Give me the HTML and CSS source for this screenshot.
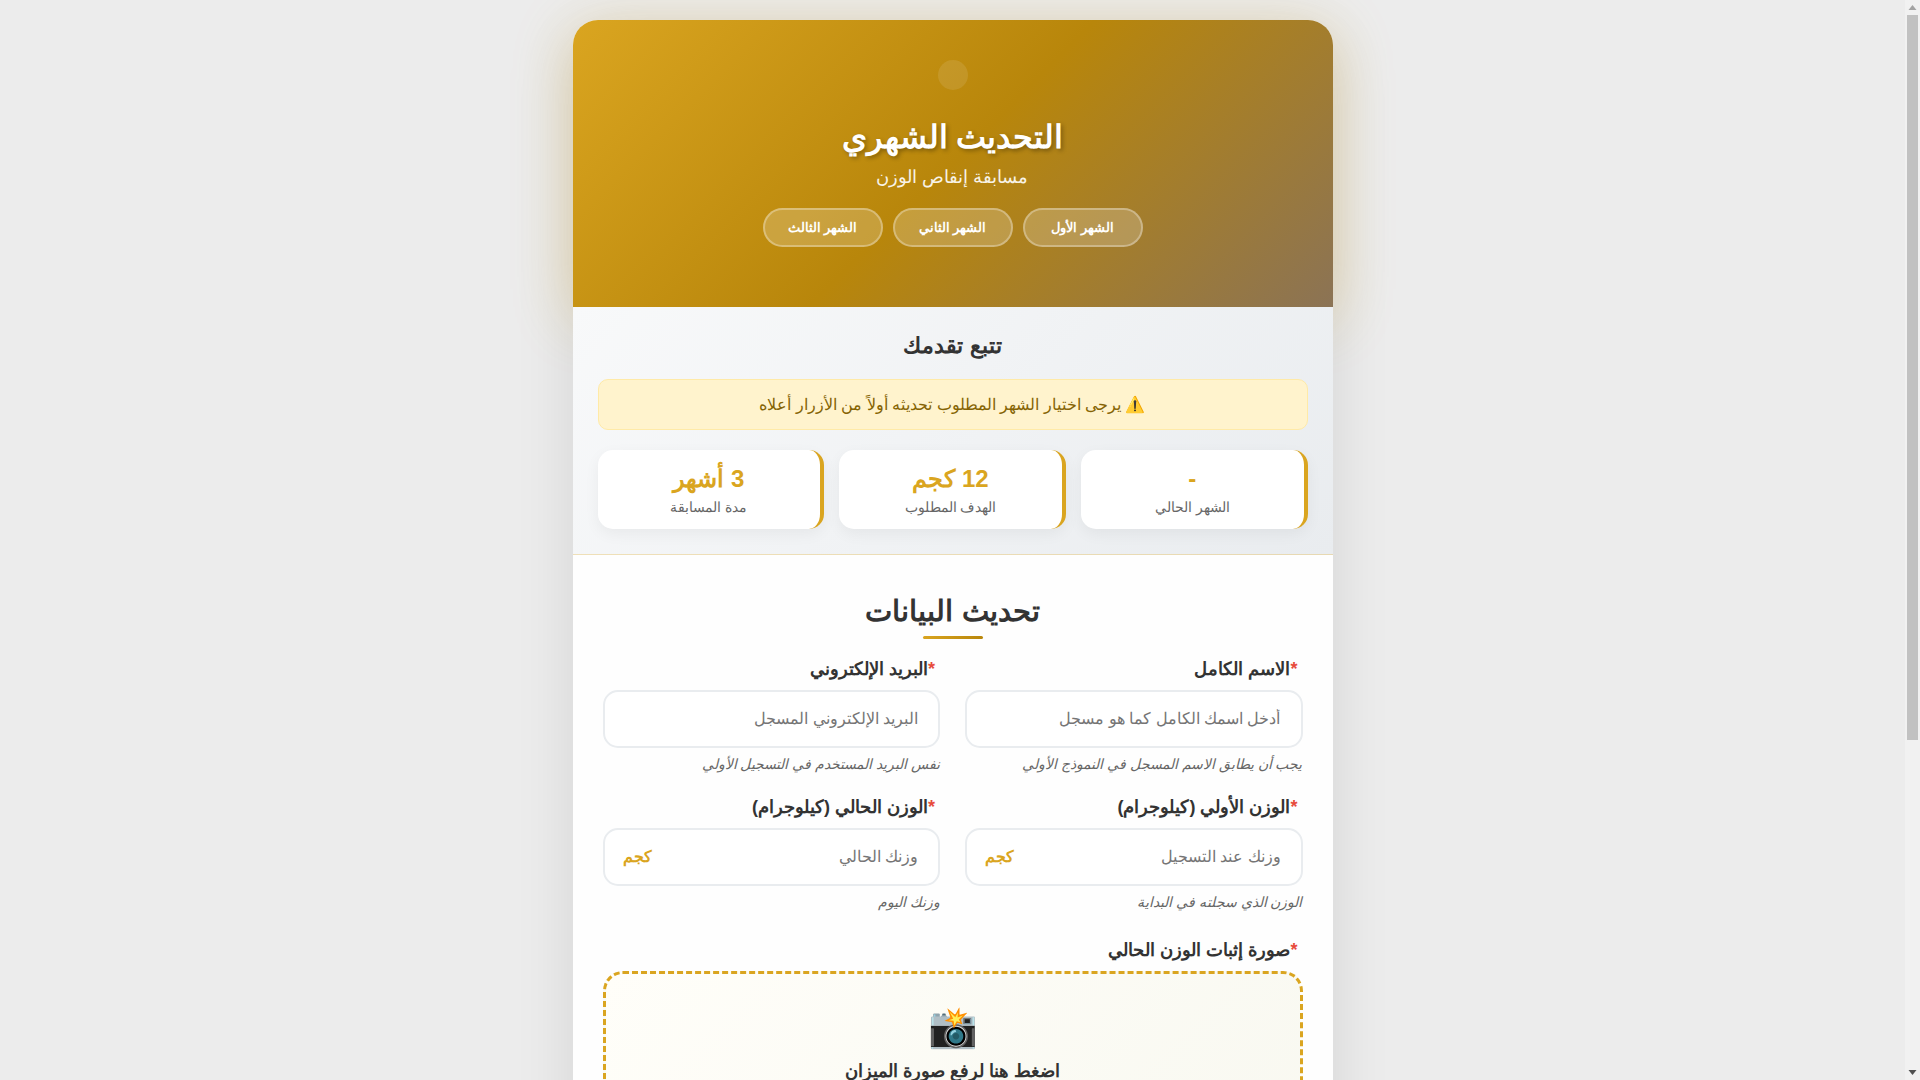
FILE: index.html
```
<!DOCTYPE html>
<html lang="ar" dir="rtl">
<head>
<meta charset="UTF-8">
<meta name="viewport" content="width=device-width, initial-scale=1">
<title>التحديث الشهري</title>
<link rel="stylesheet" href="styles.css">
</head>
<body>
<main class="container">
  <header class="header">
    <div class="logo"></div>
    <h1 class="title">التحديث الشهري</h1>
    <p class="subtitle">مسابقة إنقاص الوزن</p>
    <div class="months">
      <button type="button" class="month">الشهر الأول</button>
      <button type="button" class="month">الشهر الثاني</button>
      <button type="button" class="month">الشهر الثالث</button>
    </div>
  </header>
  <section class="progress">
    <h2 class="progress-title">تتبع تقدمك</h2>
    <p class="alert">⚠️ يرجى اختيار الشهر المطلوب تحديثه أولاً من الأزرار أعلاه</p>
    <div class="stats">
      <div class="stat"><div class="stat-value">-</div><div class="stat-label">الشهر الحالي</div></div>
      <div class="stat"><div class="stat-value">12 كجم</div><div class="stat-label">الهدف المطلوب</div></div>
      <div class="stat"><div class="stat-value">3 أشهر</div><div class="stat-label">مدة المسابقة</div></div>
    </div>
  </section>
  <form class="form">
    <h2 class="form-title">تحديث البيانات</h2>
    <div class="fields">
      <div class="field">
        <label class="label" for="name"><span class="required">*</span>الاسم الكامل</label>
        <input class="input" id="name" type="text" placeholder="أدخل اسمك الكامل كما هو مسجل">
        <p class="hint">يجب أن يطابق الاسم المسجل في النموذج الأولي</p>
      </div>
      <div class="field">
        <label class="label" for="email"><span class="required">*</span>البريد الإلكتروني</label>
        <input class="input" id="email" type="email" placeholder="البريد الإلكتروني المسجل">
        <p class="hint">نفس البريد المستخدم في التسجيل الأولي</p>
      </div>
      <div class="field">
        <label class="label" for="start"><span class="required">*</span>الوزن الأولي (كيلوجرام)</label>
        <div class="weight">
          <input class="input" id="start" type="number" placeholder="وزنك عند التسجيل">
          <span class="unit">كجم</span>
        </div>
        <p class="hint">الوزن الذي سجلته في البداية</p>
      </div>
      <div class="field">
        <label class="label" for="current"><span class="required">*</span>الوزن الحالي (كيلوجرام)</label>
        <div class="weight">
          <input class="input" id="current" type="number" placeholder="وزنك الحالي">
          <span class="unit">كجم</span>
        </div>
        <p class="hint">وزنك اليوم</p>
      </div>
    </div>
    <div class="field">
      <label class="label" for="photo"><span class="required">*</span>صورة إثبات الوزن الحالي</label>
      <label class="upload" for="photo">
        <span class="upload-icon">📸</span>
        <span class="upload-text">اضغط هنا لرفع صورة الميزان</span>
      </label>
      <input class="file" id="photo" type="file" accept="image/*">
    </div>
  </form>
</main>
<div class="scrollbar" aria-hidden="true">
  <svg class="scroll-arrow" viewBox="0 0 15 15"><path d="M7.5 5 L11.5 10 H3.5 Z" fill="#a3a3a3"/></svg>
  <div class="scroll-track"><div class="scroll-thumb"></div></div>
  <svg class="scroll-arrow" viewBox="0 0 15 15"><path d="M7.5 10 L11.5 5 H3.5 Z" fill="#505050"/></svg>
</div>
</body>
</html>
```
FILE: styles.css
```
* {
  margin: 0;
  padding: 0;
  box-sizing: border-box;
}

body {
  font-family: "Liberation Sans", sans-serif;
  background: #ececec;
  color: #333;
  padding: 20px 35px 20px 20px;
  line-height: 1.6;
}

.container {
  max-width: 760px;
  margin: 0 auto;
  background: #fefefe;
  border-radius: 25px;
  box-shadow: 0 20px 60px rgba(0, 0, 0, 0.1);
}

.header {
  background: linear-gradient(135deg, #daa520 0%, #b8860b 50%, #8b7355 100%);
  border-radius: 25px 25px 0 0;
  box-shadow: 0 10px 60px rgba(218, 165, 32, 0.3);
  padding: 40px 40px 60px;
  text-align: center;
  color: #fff;
}

.logo {
  width: 30px;
  height: 30px;
  margin: 0 auto 20px;
  border-radius: 50%;
  background: rgba(255, 255, 255, 0.1);
}

.title {
  font-size: 32px;
  line-height: 54px;
  text-shadow: 2px 2px 4px rgba(0, 0, 0, 0.3);
}

.subtitle {
  font-size: 18px;
  line-height: 26px;
  opacity: 0.9;
}

.months {
  display: flex;
  flex-wrap: wrap;
  justify-content: center;
  gap: 10px;
  margin-top: 18px;
}

.month {
  min-width: 120px;
  padding: 10px 20px;
  border: 2px solid rgba(255, 255, 255, 0.3);
  border-radius: 20px;
  background: rgba(255, 255, 255, 0.2);
  color: #fff;
  font-family: inherit;
  font-size: 13px;
  font-weight: bold;
}

.progress {
  background: linear-gradient(135deg, #f8f9fa 0%, #e9ecef 100%);
  border-bottom: 1px solid rgba(218, 165, 32, 0.3);
  padding: 20px 25px 25px;
  text-align: center;
}

.progress-title {
  font-size: 22px;
  line-height: 37px;
  margin-bottom: 15px;
}

.alert {
  padding: 12px 15px;
  border: 1px solid #ffeaa7;
  border-radius: 10px;
  background: #fff3cd;
  color: #856404;
  font-size: 16px;
  line-height: 25px;
  margin-bottom: 20px;
}

.stats {
  display: grid;
  grid-template-columns: repeat(3, 1fr);
  gap: 15px;
}

.stat {
  background: #fff;
  border-right: 4px solid #daa520;
  border-radius: 15px;
  padding: 11px 15px;
  box-shadow: 0 5px 15px rgba(0, 0, 0, 0.05);
}

.stat-value {
  color: #daa520;
  font-size: 24px;
  line-height: 35px;
  font-weight: bold;
}

.stat-label {
  color: #666;
  font-size: 14px;
  line-height: 22px;
}

.form {
  padding: 32px 30px 320px;
}

.form-title {
  font-size: 29px;
  line-height: 49px;
  margin-bottom: 16px;
  text-align: center;
}

.form-title::after {
  content: "";
  display: block;
  width: 60px;
  height: 3px;
  margin: 0 auto;
  border-radius: 2px;
  background: linear-gradient(135deg, #daa520, #b8860b);
}

.fields {
  display: grid;
  grid-template-columns: repeat(2, 1fr);
  gap: 18px 25px;
  margin-bottom: 23px;
}

.label {
  display: block;
  padding: 0 5px;
  margin-bottom: 7px;
  font-size: 18px;
  line-height: 28px;
  font-weight: bold;
}

.required {
  color: #e74c3c;
}

.input {
  display: block;
  width: 100%;
  height: 58px;
  padding: 0 20px;
  border: 2px solid #e9ecef;
  border-radius: 15px;
  background: #fff;
  font-family: inherit;
  font-size: 16px;
  text-align: right;
  appearance: textfield;
}

.weight {
  position: relative;
}

.unit {
  position: absolute;
  left: 20px;
  top: 50%;
  transform: translateY(-50%);
  color: #daa520;
  font-size: 16px;
  font-weight: bold;
}

.hint {
  margin-top: 5px;
  color: #666;
  font-size: 14px;
  line-height: 22px;
  font-style: italic;
}

.upload {
  display: block;
  padding: 25px;
  min-height: 240px;
  border: 3px dashed #daa520;
  border-radius: 20px;
  background: linear-gradient(135deg, #fffef9 0%, #f8f8f0 100%);
  text-align: center;
  cursor: pointer;
}

.upload-icon,
.upload-text {
  display: block;
}

.upload-icon {
  font-size: 40px;
  line-height: 56px;
}

.upload-text {
  font-size: 18px;
  line-height: 32px;
  font-weight: bold;
}

.file {
  display: none;
}

.scrollbar {
  position: fixed;
  top: 0;
  right: 0;
  bottom: 0;
  width: 15px;
  display: flex;
  flex-direction: column;
  background: #f1f1f1;
}

.scroll-arrow {
  display: block;
  width: 15px;
  height: 15px;
}

.scroll-track {
  flex: 1;
  padding: 0 2px;
}

.scroll-thumb {
  height: 69%;
  background: #c1c1c1;
}
```
